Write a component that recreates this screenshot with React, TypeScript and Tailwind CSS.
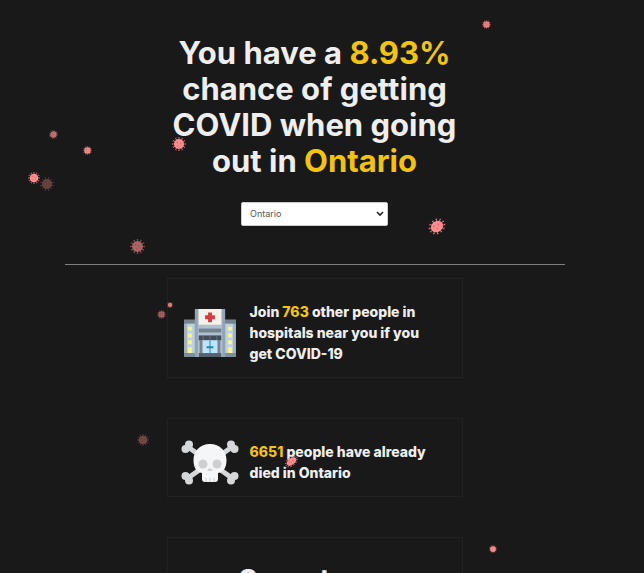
import { useState } from 'react'
import type { ReactNode } from 'react'

interface Particle {
  x: number
  y: number
  w: number
  h: number
  opacity: number
  rotate: number
}

const PARTICLES: Particle[] = [
  { x: 486, y: 24, w: 9, h: 9, opacity: 0.9, rotate: 0 },
  { x: 53, y: 134, w: 9, h: 9, opacity: 0.75, rotate: 10 },
  { x: 87, y: 150, w: 9, h: 9, opacity: 0.95, rotate: 0 },
  { x: 34, y: 178, w: 12, h: 12, opacity: 1, rotate: 0 },
  { x: 47, y: 184, w: 14, h: 14, opacity: 0.35, rotate: 15 },
  { x: 179, y: 144, w: 14, h: 14, opacity: 1, rotate: 0 },
  { x: 137, y: 246, w: 15, h: 15, opacity: 0.65, rotate: 0 },
  { x: 437, y: 226, w: 18, h: 15, opacity: 1, rotate: -40 },
  { x: 161, y: 314, w: 9, h: 9, opacity: 0.6, rotate: 0 },
  { x: 170, y: 305, w: 6, h: 6, opacity: 0.9, rotate: 0 },
  { x: 143, y: 440, w: 12, h: 12, opacity: 0.4, rotate: 0 },
  { x: 291, y: 461, w: 15, h: 9, opacity: 1, rotate: -38 },
  { x: 493, y: 549, w: 8, h: 8, opacity: 1, rotate: 0 },
]

const REGIONS = ['Ontario', 'Quebec', 'British Columbia', 'Alberta', 'Manitoba']

const SPIKES = [0, 30, 60, 90, 120, 150, 180, 210, 240, 270, 300, 330]

function Virus({ x, y, w, h, opacity, rotate }: Particle) {
  return (
    <svg
      className="absolute"
      viewBox="0 0 32 32"
      preserveAspectRatio="none"
      width={w}
      height={h}
      style={{ left: x - w / 2, top: y - h / 2, opacity, transform: `rotate(${rotate}deg)` }}
    >
      {SPIKES.map((a) => (
        <g key={a} transform={`rotate(${a} 16 16)`}>
          <path d="M16 6V1.5M14.4 1.2h3.2" stroke="#d97777" strokeWidth="1.8" fill="none" />
        </g>
      ))}
      <circle cx="16" cy="16" r="11.500" fill="#f98c8c" />
      <circle cx="12" cy="12" r="2" fill="#e66a6a" />
      <circle cx="20" cy="15" r="1.6" fill="#e66a6a" />
      <circle cx="14" cy="20" r="1.6" fill="#e66a6a" />
    </svg>
  )
}

function Hospital() {
  return (
    <svg viewBox="0 0 53 49" className="-my-1 h-12 w-13 shrink-0">
      <path d="M0 11h53v38H0z" fill="#a4b2c1" />
      <path d="M0 11h12v4H0zM41 11h12v4H41z" fill="#75838f" />
      <path d="M3 15h8v30H3zM42 15h8v30h-8z" fill="#bfd0df" />
      <path d="M0 45h53v4H0z" fill="#7f8d9b" />
      <path d="M11 0h31v49H11z" fill="#91a3b5" />
      <path d="M14 0h25v49H14z" fill="#b0bfce" />
      <path d="M15 0h23v16H15z" fill="#f5f3e9" />
      <path d="M24.500 3.500h4v3h3v4h-3v3h-4v-3h-3v-4h3z" fill="#d43c43" />
      <path d="M15 20h23v4H15z" fill="#75838f" />
      <path d="M15 27h23v5H15z" fill="#414e59" />
      <path d="M19 27h1v5h-1zM26 27h1v5h-1zM33 27h1v5h-1z" fill="#66757f" />
      <path d="M16 32h3v13h-3zM34 32h3v13h-3z" fill="#75838f" />
      <path d="M19 32h15v13H19z" fill="#bde4f8" />
      <path d="M26 32h1v13h-1zM23 38h7v2h-7z" fill="#2387b5" />
      <path d="M15 45h23v4H15z" fill="#56636e" />
      <path
        d="M4 18h4v4H4zM4 25h4v4H4zM4 32h4v4H4zM4 39h4v6H4zM45 18h4v4h-4zM45 25h4v4h-4zM45 32h4v4h-4zM45 39h4v6h-4z"
        fill="#f7f58c"
      />
    </svg>
  )
}

function Skull() {
  return (
    <svg viewBox="0 0 58 45" className="-my-1 h-[45px] w-[58px] shrink-0">
      <path d="M7 7 51 38M51 7 7 38" stroke="#d5d7d9" strokeWidth="5" />
      <g fill="#d5d7d9">
        <circle cx="8" cy="4.500" r="4" />
        <circle cx="4.500" cy="9" r="4" />
        <circle cx="50" cy="4.500" r="4" />
        <circle cx="53.500" cy="9" r="4" />
        <circle cx="4.500" cy="36" r="4" />
        <circle cx="8" cy="40.500" r="4" />
        <circle cx="53.500" cy="36" r="4" />
        <circle cx="50" cy="40.500" r="4" />
      </g>
      <path
        d="M29 4c-10 0-16.500 7-16.500 16 0 8 3 12 8.500 13v6q0 3 3 3h10q3 0 3-3v-6c5.500-1 8.500-5 8.500-13C45.500 11 39 4 29 4z"
        fill="#f5f6f7"
      />
      <circle cx="22" cy="24" r="4.500" fill="#ccd0d3" />
      <circle cx="36" cy="24" r="4.500" fill="#ccd0d3" />
      <path d="M26.500 31c0-2 1.500-3 2.500-2 1-1 2.500 0 2.500 2z" fill="#ccd0d3" />
      <path d="M25 38v4M29 38v4M33 38v4" stroke="#ccd0d3" strokeWidth="1" />
    </svg>
  )
}

function StatCard({ icon, children }: { icon: ReactNode; children: ReactNode }) {
  return (
    <section className="flex w-full max-w-74 items-center border border-[#222222] pt-[22px] pr-6 pb-[13px] pl-3">
      <div className="flex w-15 shrink-0 justify-center">{icon}</div>
      <p className="ml-2.5 text-[14px] leading-[21px] font-extrabold">{children}</p>
    </section>
  )
}

function Accent({ children }: { children: ReactNode }) {
  return <span className="text-[#f2c40f]">{children}</span>
}

export default function App() {
  const [region, setRegion] = useState('Ontario')

  return (
    <div className="relative min-h-screen overflow-hidden bg-[#191919] pr-[15px] font-['Inter',sans-serif] text-[#eeeeee]">
      <main className="flex flex-col items-center pt-[35px]">
        <h1 className="w-full max-w-75 text-center text-[31px] leading-9 font-bold">
          You have a <Accent>8.93%</Accent> chance of getting COVID when going out in <Accent>{region}</Accent>
        </h1>

        <div className="relative mt-[23px] w-[147px]">
          <select
            aria-label="Region"
            value={region}
            onChange={(e) => setRegion(e.target.value)}
            className="block h-6 w-full appearance-none rounded-xs border border-[#cccccc] bg-white px-2 text-[9px] text-[#555555]"
          >
            {REGIONS.map((r) => (
              <option key={r}>{r}</option>
            ))}
          </select>
          <svg viewBox="0 0 8 6" className="pointer-events-none absolute top-[9px] right-1 h-1.5 w-2">
            <path d="M1 1l3 3 3-3" fill="none" stroke="#222222" strokeWidth="1.600" />
          </svg>
        </div>

        <hr className="mt-[38px] w-4/5 max-w-125 border-[#808080]" />

        <div className="mt-[13px] flex w-full flex-col items-center gap-10">
          <StatCard icon={<Hospital />}>
            Join <Accent>763</Accent> other people in hospitals near you if you get COVID-19
          </StatCard>
          <StatCard icon={<Skull />}>
            <Accent>6651</Accent> people have already died in {region}
          </StatCard>
          <section className="w-full max-w-74 border border-[#222222] px-3 pt-6 pb-3">
            <h2 className="text-center text-[29px] leading-9 font-bold">Symptoms</h2>
          </section>
        </div>
      </main>

      {/* floating virus particles */}
      <div aria-hidden="true" className="pointer-events-none absolute inset-0 overflow-hidden">
        {PARTICLES.map((p) => (
          <Virus key={`${p.x}-${p.y}`} {...p} />
        ))}
      </div>
    </div>
  )
}
